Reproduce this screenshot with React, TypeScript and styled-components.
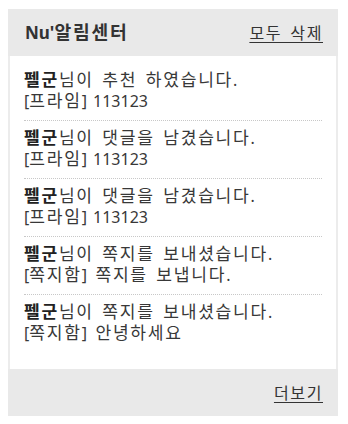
import React from 'react';
import styled, { createGlobalStyle } from 'styled-components';

type Notice = {
  sender: string;
  action: string;
  detail: string;
};

const notices: Notice[] = [
  { sender: '펠군', action: '님이 추천 하였습니다.', detail: '[프라임] 113123' },
  { sender: '펠군', action: '님이 댓글을 남겼습니다.', detail: '[프라임] 113123' },
  { sender: '펠군', action: '님이 댓글을 남겼습니다.', detail: '[프라임] 113123' },
  { sender: '펠군', action: '님이 쪽지를 보내셨습니다.', detail: '[쪽지함] 쪽지를 보냅니다.' },
  { sender: '펠군', action: '님이 쪽지를 보내셨습니다.', detail: '[쪽지함] 안녕하세요' },
];

// hangul glyphs in the reference run larger and wider than latin ones, so hangul runs get their own span
const spaced = (text: string) =>
  text.split(/([\uAC00-\uD7A3 ]+)/).map((part, i) =>
    /[\uAC00-\uD7A3]/.test(part) ? <Ko key={i}>{part}</Ko> : part,
  );

const App = () => (
  <>
    <GlobalStyle />
    <Panel>
      <Header>
        <Title>{spaced("Nu'알림센터")}</Title>
        <TextLink href="#">{spaced('모두 삭제')}</TextLink>
      </Header>
      <List>
        {notices.map((n, i) => (
          <Item key={i}>
            <Line>
              <Sender>{spaced(n.sender)}</Sender>
              {spaced(n.action)}
            </Line>
            <Line>{spaced(n.detail)}</Line>
          </Item>
        ))}
      </List>
      <Footer>
        <TextLink href="#">{spaced('더보기')}</TextLink>
      </Footer>
    </Panel>
  </>
);

const GlobalStyle = createGlobalStyle`
  body {
    margin: 9px 8px;
    background: #fff;
    font-family: 'Noto Sans', 'Noto Sans CJK KR', sans-serif;
  }
`;

const Ko = styled.span`
  font-family: 'Noto Sans CJK KR', sans-serif;
  font-size: 1.07em;
  letter-spacing: 0.1em;
  word-spacing: 3px;
  line-height: 1;
`;

const Panel = styled.div`
  width: 330px;
  display: flex;
  flex-direction: column;
`;

const Header = styled.div`
  height: 47px;
  padding: 0 15px 0 17px;
  background: #e9e9e9;
  display: flex;
  align-items: center;
  justify-content: space-between;
`;

const Title = styled.h2`
  margin: 0;
  font-size: 17px;
  line-height: 20px;
  font-weight: 700;
  color: #333;
`;

const TextLink = styled.a`
  font-size: 15px;
  line-height: 20px;
  color: #333;
  text-decoration: underline;
  text-underline-offset: 3px;
`;

const List = styled.ul`
  margin: 0;
  list-style: none;
  background: #fff;
  border-left: 2px solid #ececec;
  border-right: 2px solid #ececec;
  padding: 7px 14px 17px;
`;

const Item = styled.li`
  padding: 7px 0 8px;
  border-bottom: 1px dotted #c8c8c8;

  &:last-child {
    border-bottom: none;
  }
`;

const Line = styled.div`
  height: 21px;
  font-size: 16px;
  line-height: 21px;
  word-spacing: 2px;
  color: #383838;
  white-space: nowrap;
`;

const Sender = styled.b`
  color: #222;
`;

const Footer = styled.div`
  height: 47px;
  padding: 0 15px 0 17px;
  background: #e9e9e9;
  display: flex;
  align-items: center;
  justify-content: flex-end;
`;

export default App;
